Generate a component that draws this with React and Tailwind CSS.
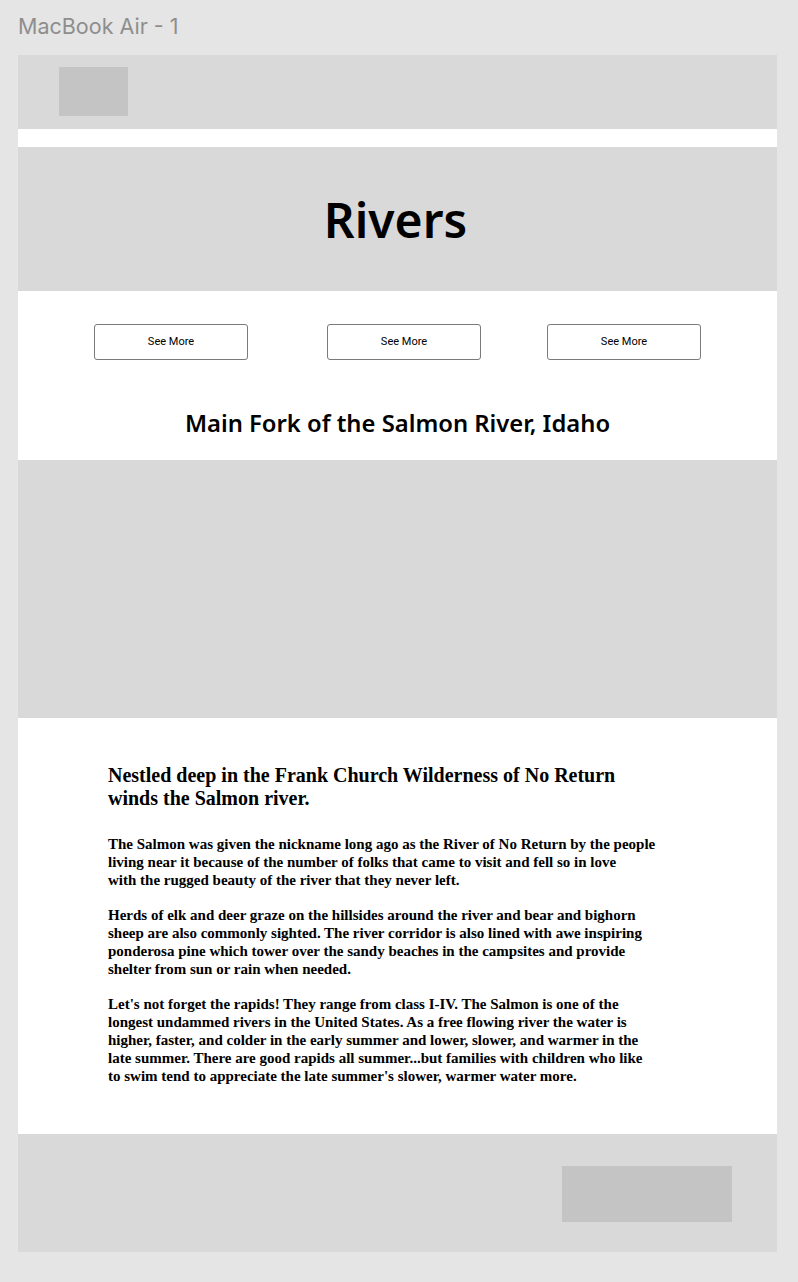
import React from 'react';

// line breaks follow the design file
const paragraphs = [
  [
    "The Salmon was given the nickname long ago as the River of No Return by the people",
    "living near it because of the number of folks that came to visit and fell so in love",
    "with the rugged beauty of the river that they never left.",
  ],
  [
    "Herds of elk and deer graze on the hillsides around the river and bear and bighorn",
    "sheep are also commonly sighted. The river corridor is also lined with awe inspiring",
    "ponderosa pine which tower over the sandy beaches in the campsites and provide",
    "shelter from sun or rain when needed.",
  ],
  [
    "Let's not forget the rapids! They range from class I-IV. The Salmon is one of the",
    "longest undammed rivers in the United States. As a free flowing river the water is",
    "higher, faster, and colder in the early summer and lower, slower, and warmer in the",
    "late summer. There are good rapids all summer...but families with children who like",
    "to swim tend to appreciate the late summer's slower, warmer water more.",
  ],
];

const serif = { fontFamily: '"Liberation Serif", "DejaVu Serif", serif' };

export default function App() {
  return (
    <div className="w-[798px] h-[1282px] bg-[#e5e5e5] pl-[18px] pr-[21px]">
      {/* frame label */}
      <div
        className="h-[55px] pt-[12px] text-[21.5px] leading-[28px] text-[#8e8e8e]"
        style={{ fontFamily: 'Inter, "Liberation Sans", sans-serif' }}
      >
        MacBook Air - 1
      </div>

      <div className="w-[759px] bg-white">
        {/* top bar */}
        <header className="h-[74px] bg-[#d9d9d9] pl-[41px] pt-[12px]">
          <div className="w-[69px] h-[49px] bg-[#c4c4c4]" />
        </header>

        <div className="h-[18px]" />

        {/* hero */}
        <section className="h-[144px] bg-[#d9d9d9] flex items-center justify-center">
          <h1
            className="text-[48px] leading-none font-semibold text-black pt-[2px] pr-[4px]"
            style={{ fontFamily: '"Noto Sans", "Open Sans", sans-serif' }}
          >
            Rivers
          </h1>
        </section>

        {/* buttons */}
        <div className="h-[169px] pt-[33px]">
          <div className="flex pl-[76px] gap-[79px]">
            {[0, 1, 2].map(i => (
              <button
                key={i}
                className={`w-[154px] h-[36px] border border-[#7a7a7a] rounded-[3px] bg-white text-[11px] text-black pt-[1px] ${i === 2 ? '-ml-[13px]' : ''}`}
                style={{ fontFamily: 'Roboto, "Liberation Sans", sans-serif' }}
              >
                See More
              </button>
            ))}
          </div>
          <h2
            className="mt-[47px] text-center text-[23.8px] leading-[32px] font-semibold text-black"
            style={{ fontFamily: '"Noto Sans", "Open Sans", sans-serif' }}
          >
            Main Fork of the Salmon River, Idaho
          </h2>
        </div>

        {/* image placeholder */}
        <div className="h-[258px] bg-[#d9d9d9]" />

        {/* body copy */}
        <article className="h-[416px] pl-[90px] pt-[46px] text-black">
          <h3 className="text-[20px] leading-[23px] font-bold" style={serif}>
            Nestled deep in the Frank Church Wilderness of No Return<br />winds the Salmon river.
          </h3>
          <div className="mt-[25px] flex flex-col gap-[17px]">
            {paragraphs.map((lines, i) => (
              <p key={i} className="text-[15px] leading-[18px] font-bold whitespace-nowrap" style={serif}>
                {lines.map((l, j) => (
                  <span key={j} className="block">{l}</span>
                ))}
              </p>
            ))}
          </div>
        </article>

        {/* footer */}
        <footer className="h-[118px] bg-[#d9d9d9] pl-[544px] pt-[32px]">
          <div className="w-[170px] h-[56px] bg-[#c4c4c4]" />
        </footer>
      </div>
    </div>
  );
}
